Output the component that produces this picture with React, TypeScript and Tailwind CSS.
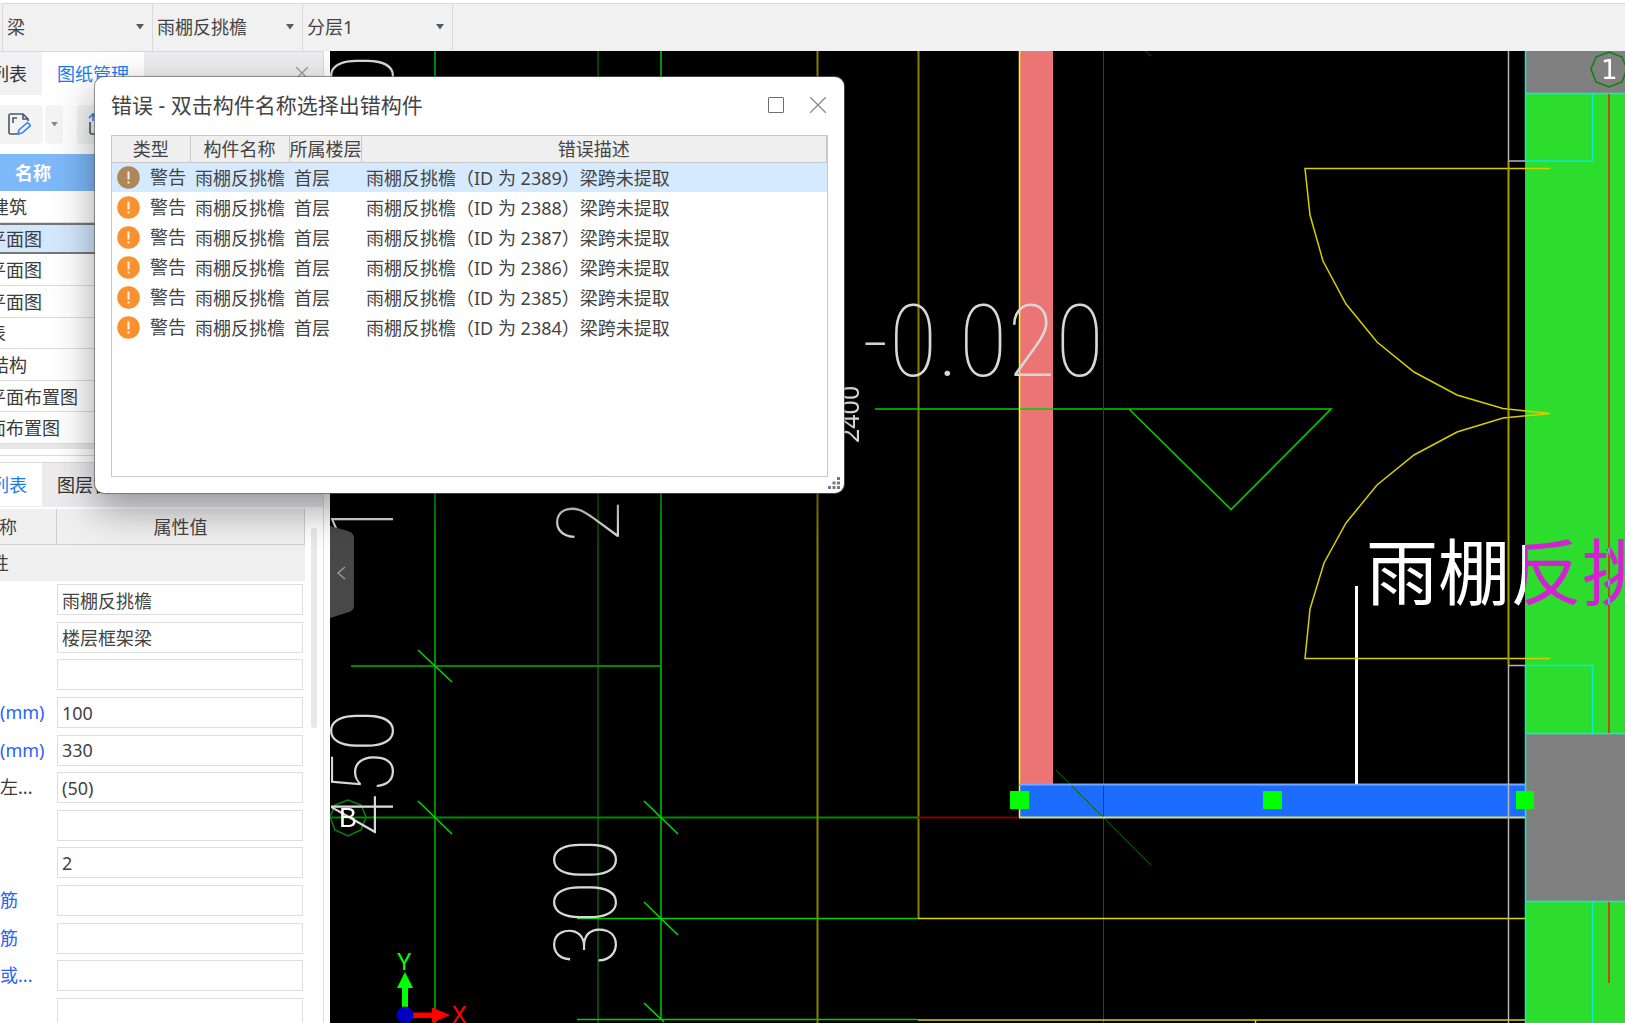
import type { ReactNode } from "react";

const selectors = [
  { label: "构件类型", value: "梁" },
  { label: "构件名称", value: "雨棚反挑檐" },
  { label: "分层", value: "分层1" },
];

const drawings = [
  { name: "建筑", indent: "pl-[71px]" },
  { name: "平面图", indent: "pl-[68px]", selected: true },
  { name: "平面图", indent: "pl-[68px]" },
  { name: "平面图", indent: "pl-[68px]" },
  { name: "表", indent: "pl-[68px]" },
  { name: "结构", indent: "pl-[71px]" },
  { name: "平面布置图", indent: "pl-[68px]" },
  { name: "面布置图", indent: "pl-[68px]" },
];

const properties = [
  { label: "", aria: "名称", value: "雨棚反挑檐" },
  { label: "", aria: "结构类别", value: "楼层框架梁" },
  { label: "", aria: "跨数量", value: "" },
  { label: "截面宽度(mm)", value: "100", blue: true },
  { label: "截面高度(mm)", value: "330", blue: true },
  { label: "轴线距梁左...", value: "(50)" },
  { label: "", aria: "箍筋", value: "" },
  { label: "", aria: "肢数", value: "2" },
  { label: "上部通长筋", value: "", blue: true },
  { label: "下部通长筋", value: "", blue: true },
  { label: "侧面构造或...", value: "", blue: true },
  { label: "", aria: "拉筋", value: "" },
];

const errorIds = [2389, 2388, 2387, 2386, 2385, 2384];

function Caret({ className }: { className: string }) {
  return (
    <svg viewBox="0 0 8 6" className={className} aria-hidden="true">
      <path d="M0 0h8L4 5.5z" fill="currentColor" />
    </svg>
  );
}

function TopBar() {
  return (
    <header className="flex h-[51px] shrink-0 border-t-[3px] border-white bg-[#f1f1f1] pl-[2px]">
      {selectors.map((s) => (
        <div key={s.label} className="relative h-full w-[150px] border-t border-l border-[#d9d9d9]">
          <select
            aria-label={s.label}
            className="h-full w-full appearance-none bg-transparent pl-1 text-[18px] text-[#444]"
          >
            <option>{s.value}</option>
          </select>
          <Caret className="pointer-events-none absolute top-5 right-2 h-[6px] w-2 text-[#555b66]" />
        </div>
      ))}
      <div className="flex-1 border-t border-l border-[#d9d9d9]" />
    </header>
  );
}

function Tab({ children, active, className }: { children: ReactNode; active?: boolean; className: string }) {
  return (
    <button
      className={
        (active ? "bg-white text-[#1a7cf0] " : "text-[#333] ") +
        "h-[43px] shrink-0 text-left text-[18px] leading-[44px] whitespace-nowrap " +
        className
      }
    >
      {children}
    </button>
  );
}

function SidePanel() {
  return (
    <aside className="flex w-[330px] shrink-0 justify-end overflow-hidden bg-white">
      <div className="flex w-[410px] shrink-0 flex-col pr-[6px]">
        <div className="flex min-h-0 flex-1 flex-col border-r border-[#dcdcdc]">
          <div className="flex h-[43px] shrink-0 border-t border-[#d9d9d9] bg-[#ececef]">
            <Tab className="w-[122px] bg-[#f1f1f3] pl-[71px]">列表</Tab>
            <Tab active className="w-[102px] pl-[15px]">
              图纸管理
            </Tab>
            <button aria-label="关闭面板" className="mr-[15px] ml-auto self-center">
              <svg viewBox="0 0 12 12" className="h-3 w-3 stroke-[#999]" fill="none" strokeWidth="1.3">
                <path d="M0 0l12 12M12 0L0 12" />
              </svg>
            </button>
          </div>

          <div className="flex h-[60px] shrink-0 items-center gap-[2px] pl-[60px]">
            <button aria-label="编辑图纸" className="flex h-[39px] w-[63px] items-center justify-end rounded bg-[#f4f4f4] pr-3">
              <svg viewBox="0 0 24 24" className="h-6 w-6" fill="none" strokeWidth="1.6">
                <path
                  d="M12 22H3.5Q2 22 2 20.500V3.500Q2 2 3.500 2H16l5 5M16 2v5h5v2M6 11V6h4"
                  className="stroke-[#4a5568]"
                />
                <path d="M11 22l1-4L20.500 10.500l3 3L15 21z" className="stroke-[#3b82f6]" />
              </svg>
            </button>
            <button aria-label="更多编辑" className="flex h-[39px] w-[18px] items-center justify-center rounded bg-[#f4f4f4]">
              <Caret className="h-[5px] w-[7px] text-[#888]" />
            </button>
            <button aria-label="导出图纸" className="ml-3 flex h-[39px] w-[63px] items-center rounded bg-[#f4f4f4] pl-[10px]">
              <svg viewBox="0 0 24 24" className="h-6 w-6" fill="none" strokeWidth="1.6">
                <path d="M3 10v10q0 2 2 2h14" className="stroke-[#4a5568]" />
                <path d="M6 9V3M2 6l4-4 4 4" className="stroke-[#3b82f6]" />
              </svg>
            </button>
          </div>

          <div className="flex h-[37px] shrink-0 items-center bg-[#7db8f8] pt-px pl-[95px] text-[18px] font-bold text-white">
            名称
          </div>
          <ul className="grid h-[253px] shrink-0 grid-rows-8">
            {drawings.map((d, i) => (
              <li
                key={i}
                className={
                  (d.selected ? "border-y-2 border-[#777] bg-[#d3e7fd] " : "border-b border-[#dcdcdc] ") +
                  "flex items-center pt-px text-[18px] leading-6 text-[#3c3c3c] " +
                  d.indent
                }
              >
                {d.name}
              </li>
            ))}
          </ul>
          <div className="h-[5px] shrink-0 bg-[#e7e7e7]" />
          <div className="mt-[6px] h-[8px] shrink-0 border-y border-[#d9d9d9]" />

          <div className="flex h-[44px] shrink-0 bg-[#ececef]">
            <Tab active className="w-[122px] pl-[71px]">
              列表
            </Tab>
            <Tab className="pl-[15px]">图层管理</Tab>
          </div>

          <div className="mt-[2px] flex min-h-0 flex-1 pr-[6px]">
            <div className="flex w-[385px] flex-col">
              <div className="grid h-9 shrink-0 grid-cols-[137px_1fr] border-r border-b border-[#cfcfcf] bg-[#f0f0f0] text-center text-[18px] leading-9 text-[#444]">
                <div className="border-r border-[#cfcfcf] pl-[25px] text-left">属性名称</div>
                <div>属性值</div>
              </div>
              <div className="h-9 shrink-0 bg-[#f0f0f0] pl-[17px] text-[18px] leading-9 text-[#444]">基本属性</div>
              <div className="grid h-[451px] shrink-0 grid-rows-12">
                {properties.map((p, i) => (
                  <label
                    key={i}
                    className={
                      (p.blue ? "text-[#2b61f5] " : "text-[#3c3c3c] ") +
                      "grid grid-cols-[129px_1fr] items-center pr-[2px] pl-2 text-[18px] whitespace-nowrap"
                    }
                  >
                    <span>{p.label}</span>
                    <input
                      aria-label={p.aria}
                      defaultValue={p.value}
                      className="h-[31px] w-full min-w-0 border border-[#dedede] bg-white pl-1 text-[#444] outline-none"
                    />
                  </label>
                ))}
              </div>
            </div>
            <div className="mt-[19px] ml-auto h-[200px] w-[6px] rounded-full bg-[#e8e8e8]" />
          </div>
        </div>
      </div>
    </aside>
  );
}

const plotterText = "font-['Roboto_Condensed','Roboto',sans-serif] font-thin";

function DrawingCanvas() {
  return (
    <main className="relative min-w-0 flex-1 overflow-hidden bg-black">
      <svg
        viewBox="330 51 1295 972"
        preserveAspectRatio="xMinYMin slice"
        className="isolate block h-full w-full"
        fill="none"
      >
        {/* beams, walls and columns */}
        <path d="M1020 51h33v733h-33z" fill="#ea7574" />
        <path d="M1525 93h100v640h-100zM1525 901h100v122h-100z" fill="#2ddd2d" />
        <path d="M1525 51h100v42h-100zM1525 733h100v168h-100z" fill="#808080" />
        <path d="M1019 784h506v33h-506z" fill="#1c6cff" />

        {/* dimension and axis lines */}
        <g strokeWidth="2">
          <path d="M598 51V1023" stroke="#004a00" />
          <path d="M435 51V1023M330 817.500H918M351 666H661" stroke="#008a00" />
          <path d="M661 51V1019" stroke="#009a00" />
          <path d="M817.500 51V1023M918.500 51V918" stroke="#858000" />
          <path d="M918 817.500H1019" stroke="#800000" />
        </g>
        <path d="M577 918.500H918M577 1019.500H918" stroke="#00d000" strokeWidth="1.5" />
        <path
          d="M418 650L452 682M418 801L452 834M644 801L678 834M644 902L678 935M644 1003L664 1022"
          stroke="#00d800"
          strokeWidth="1.6"
        />
        <path d="M875 409H1331L1231 509.500L1129 409" stroke="#00d000" strokeWidth="1.6" />
        <path d="M1103.500 51V1023M1145 51L1151 56M1056 770L1151 865" stroke="#006000" />
        <path d="M1019.500 51V817" stroke="#ffff00" strokeWidth="1.5" />
        <path d="M918 918.500H1525M918 1020H1525M1255.500 1020V1023" stroke="#dcd400" strokeWidth="1.5" />
        <path d="M1019 784.500H1525" stroke="#7ba6ff" strokeWidth="2" />
        <path d="M1019 817.500H1525" stroke="#d8dc80" strokeWidth="2" />
        <path d="M1508.500 51V161H1525M1525 665.500H1508.500V1023" stroke="#b5b5b5" strokeWidth="1.5" />
        <path d="M1356.500 586V784" stroke="#fff" strokeWidth="3" />
        <path
          d="M1525.500 51V161H1592.500V93M1525 93.500H1625M1525.500 1023V665.500H1592.500V733M1525 733.500H1625M1525 901.500H1625M1592.500 901V1023"
          stroke="#08eed0"
          strokeWidth="1.5"
        />
        <path d="M1609 94V733M1609 902V983" stroke="#c04a18" strokeWidth="2" />

        {/* door swings */}
        <path
          d="M1550 168.500H1305L1310 215L1323 261L1346 304L1377 342L1414 372L1457 395L1503 408.500L1550 413.500L1503 418L1457 432L1414 455L1377 485L1346 523L1324 563L1310 609L1305 658.500H1550"
          stroke="#d6ce00"
          strokeWidth="1.5"
        />
        <path d="M1508.500 161V665" stroke="#a8a000" strokeWidth="2" />

        {/* grips */}
        <path d="M1010 791h19v18h-19zM1263 791h19v18h-19zM1516 791h18v18h-18z" fill="#0f0" />

        {/* axis markers */}
        <g stroke="#0b800b" strokeWidth="1.5">
          <path d="M1609 52L1596 57L1591 69L1596 82L1609 87L1622 82L1627 69L1622 57Z" />
          <path d="M348 800L335 805L330 817L335 830L348 836L361 830L366 817L361 805Z" />
        </g>

        {/* drawing annotations */}
        <g fill="#fff">
          <g fill="#d8d8d8" className={plotterText + " text-[88px]"}>
            <text x="862" y="376" className="text-[100px]">
              -0.020
            </text>
            <text transform="translate(616 966) rotate(-90)">300</text>
            <text transform="translate(393 837) rotate(-90)">450</text>
            <text transform="translate(619 543) rotate(-90)">2</text>
            <text transform="translate(393 543) rotate(-90)">1</text>
            <text transform="translate(393 97) rotate(-90)">0</text>
          </g>
          <text transform="translate(859 443) rotate(-90)" className="text-[25px]" fill="#eee">
            2400
          </text>
          <text x="339" y="827" className="font-['Liberation_Sans',sans-serif] text-[27px]">
            B
          </text>
          <text x="1601" y="79" className="font-['DejaVu_Sans',sans-serif] text-[26px]">
            1
          </text>
          <text x="1366" y="599" className="text-[72px] mix-blend-difference">
            雨棚反挑
          </text>
        </g>

        {/* coordinate triad */}
        <path d="M402 1010V988H397L405 972L413 988H408V1010Z" fill="#0f0" />
        <path d="M411 1012.500H432V1007.500L450 1015L432 1023V1018H411Z" fill="#f00" />
        <circle cx="405" cy="1015" r="8.500" fill="#0000c0" />
        <g className="font-['Roboto',sans-serif] text-[24px]">
          <text x="397" y="970" fill="#0f0">
            Y
          </text>
          <text x="452" y="1023" fill="#f00">
            X
          </text>
        </g>
      </svg>
      <button aria-label="收起面板" className="absolute top-[473px] left-0 h-[95px] w-6">
        <svg viewBox="0 0 24 95" className="h-full w-full" fill="none">
          <path d="M0 2L18 7Q24 9 24 14V82Q24 86 19 88L0 94Z" fill="#484848" />
          <path d="M15 43L8 49L15 55" stroke="#999" strokeWidth="1.5" />
        </svg>
      </button>
    </main>
  );
}

function WarningIcon({ dim }: { dim?: boolean }) {
  return (
    <svg viewBox="0 0 23 23" className="h-[23px] w-[23px] shrink-0" role="img" aria-label="警告图标">
      <circle cx="11.500" cy="11.500" r="11.300" fill={dim ? "#ad8757" : "#f9922e"} />
      <path d="M11.500 5.500v8M11.500 15.500v2" stroke="#fff" strokeOpacity=".9" strokeWidth="2" />
    </svg>
  );
}

function ErrorDialog() {
  return (
    <section
      role="dialog"
      aria-labelledby="error-title"
      className="absolute top-[77px] left-[95px] flex h-[416px] w-[749px] flex-col rounded-[9px] bg-white px-4 pb-4 shadow-[0_16px_40px_rgba(0,0,0,0.38),0_0_2px_rgba(0,0,0,0.5)] ring-1 ring-[#6e6e6e]/60"
    >
      <div className="flex h-[58px] shrink-0 items-center pb-[3px]">
        <h1 id="error-title" className="flex-1 text-[21px] leading-7 text-[#444]">
          错误 - 双击构件名称选择出错构件
        </h1>
        <button aria-label="最大化" className="mr-[26px] h-4 w-4 rounded-[1px] border border-[#6d6d6d]" />
        <button aria-label="关闭" className="mr-[2px]">
          <svg viewBox="0 0 16 16" className="h-4 w-4 stroke-[#8a8a8a]" fill="none" strokeWidth="1.3">
            <path d="M0 0l16 16M16 0L0 16" />
          </svg>
        </button>
      </div>
      <div className="min-h-0 flex-1 border border-[#c9c9c9]">
        <table className="w-full table-fixed border-collapse text-[18px] leading-6 whitespace-nowrap text-[#444]">
          <colgroup>
            <col className="w-[78px]" />
            <col className="w-[99px]" />
            <col className="w-[72px]" />
            <col />
          </colgroup>
          <thead>
            <tr className="h-[26px] border-b border-[#c9c9c9] bg-[#efefef]">
              {["类型", "构件名称", "所属楼层", "错误描述"].map((h) => (
                <th key={h} className="border-r border-[#c9c9c9] p-0 font-normal">
                  {h}
                </th>
              ))}
            </tr>
          </thead>
          <tbody>
            {errorIds.map((id, i) => (
              <tr key={id} className={i === 0 ? "h-[30px] bg-[#d5e9ff]" : "h-[30px]"}>
                <td className="p-0 pl-[5px]">
                  <span className="flex items-center gap-[10px]">
                    <WarningIcon dim={i === 0} />
                    警告
                  </span>
                </td>
                <td className="p-0 pt-px pl-[5px]">雨棚反挑檐</td>
                <td className="p-0 pt-px pl-[5px]">首层</td>
                <td className="p-0 pt-px pl-[5px]">{`雨棚反挑檐（ID 为 ${id}）梁跨未提取`}</td>
              </tr>
            ))}
          </tbody>
        </table>
      </div>
      <svg viewBox="0 0 12 12" className="absolute right-1 bottom-1 h-3 w-3" fill="#747a84" aria-hidden="true">
        <path d="M9 0h3v3h-3zM4.500 4.500h3v3h-3zM9 4.500h3v3h-3zM0 9h3v3h-3zM4.500 9h3v3h-3zM9 9h3v3h-3z" />
      </svg>
    </section>
  );
}

export default function App() {
  return (
    <div className="relative flex h-screen flex-col overflow-hidden bg-white font-['Noto_Sans','Noto_Sans_CJK_SC',sans-serif]">
      <TopBar />
      <div className="flex min-h-0 flex-1">
        <SidePanel />
        <DrawingCanvas />
      </div>
      <ErrorDialog />
    </div>
  );
}
